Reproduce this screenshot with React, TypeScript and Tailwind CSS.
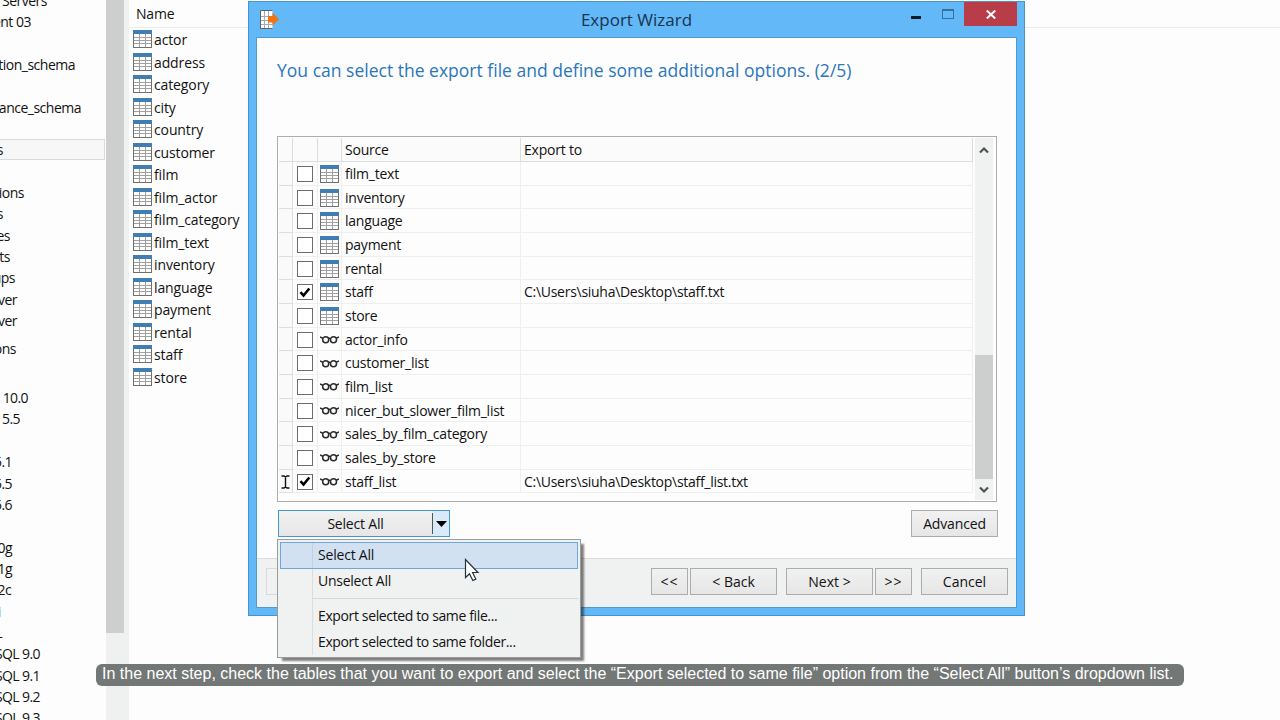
import clsx from 'clsx';

type TreeItem = { label: string; right: number; selected?: boolean; faded?: boolean; tight?: boolean };

// Object tree, scrolled sideways so only the ends of the labels show.
const serverTree: TreeItem[] = [
  { label: 'Servers', right: 47 },
  { label: 'ent 03', right: 31 },
  { label: '', right: 0 },
  { label: 'tion_schema', right: 75 },
  { label: '', right: 0 },
  { label: 'ance_schema', right: 81 },
  { label: '', right: 0 },
  { label: 's', right: 3, selected: true },
  { label: '', right: 0 },
  { label: 'ions', right: 24 },
  { label: 's', right: 3 },
  { label: 'es', right: 10 },
  { label: 'ts', right: 10 },
  { label: 'ups', right: 15 },
  { label: 'ver', right: 17 },
  { label: 'ver', right: 17 },
];

const versionTree: TreeItem[] = [
  { label: '10.0', right: 28, tight: true },
  { label: '5.5', right: 20, tight: true },
  { label: '', right: 0 },
  { label: '5.1', right: 12, tight: true },
  { label: '5.5', right: 12, tight: true },
  { label: '5.6', right: 12, tight: true },
  { label: '', right: 0 },
  { label: '0g', right: 12, tight: true },
  { label: '1g', right: 12, tight: true },
  { label: '2c', right: 11, tight: true },
  { label: 'i', right: 1, faded: true },
  { label: 'L', right: 2 },
  { label: 'SQL 9.0', right: 40, tight: true },
  { label: 'SQL 9.1', right: 40, tight: true },
  { label: 'SQL 9.2', right: 40, tight: true },
  { label: 'SQL 9.3', right: 40, tight: true },
];

const tables = [
  'actor', 'address', 'category', 'city', 'country', 'customer', 'film', 'film_actor',
  'film_category', 'film_text', 'inventory', 'language', 'payment', 'rental', 'staff', 'store',
];

type ExportRow = { name: string; kind: 'table' | 'view'; path?: string; editing?: boolean };

const exportRows: ExportRow[] = [
  { name: 'film_text', kind: 'table' },
  { name: 'inventory', kind: 'table' },
  { name: 'language', kind: 'table' },
  { name: 'payment', kind: 'table' },
  { name: 'rental', kind: 'table' },
  { name: 'staff', kind: 'table', path: 'C:\\Users\\siuha\\Desktop\\staff.txt' },
  { name: 'store', kind: 'table' },
  { name: 'actor_info', kind: 'view' },
  { name: 'customer_list', kind: 'view' },
  { name: 'film_list', kind: 'view' },
  { name: 'nicer_but_slower_film_list', kind: 'view' },
  { name: 'sales_by_film_category', kind: 'view' },
  { name: 'sales_by_store', kind: 'view' },
  { name: 'staff_list', kind: 'view', path: 'C:\\Users\\siuha\\Desktop\\staff_list.txt', editing: true },
];

function TableIcon() {
  return (
    <svg width="19" height="18" viewBox="0 0 19 18" className="shrink-0">
      <rect x="0.5" y="0.5" width="18" height="17" fill="#fff" stroke="#707070" />
      <path d="M1 7.5h17M1 10.5h17M1 13.5h17M6.5 4v13M12.5 4v13" stroke="#a0a0a0" fill="none" />
      <rect width="19" height="4" fill="#3f7db3" />
    </svg>
  );
}

function ViewIcon() {
  return (
    <svg width="19" height="9" viewBox="0 0 19 9" fill="none" stroke="#2a2a2a" strokeWidth="1.5" className="shrink-0">
      <path d="M0 2l2.800 1.200M19 2l-2.800 1.200M8.300 3.800q1.200-1 2.400 0" />
      <circle cx="5.700" cy="4.700" r="3" />
      <circle cx="13.500" cy="4.700" r="3" />
    </svg>
  );
}

function ExportIcon() {
  return (
    <svg width="20" height="19" viewBox="0 0 20 19">
      <path d="M1.500.5h12v18h-12z" fill="#fff" />
      <path d="M2 6.500h11M2 10.500h11M2 14.500h11M5.500 1v17M9.500 1v17" stroke="#a3a9ae" />
      <path d="M13.500.5h-12v18h12" fill="none" stroke="#59636c" />
      <path d="M9 6h4.500V2.700L20 9.200l-6.500 6.500V12.500H9z" fill="#f07412" />
    </svg>
  );
}

function Checkbox({ checked }: { checked: boolean }) {
  return (
    <span className="mr-px flex size-[16px] items-center justify-center border border-[#6c6c6c] bg-white">
      {checked && (
        <svg width="12" height="11" viewBox="0 0 12 11" fill="none" stroke="#000" strokeWidth="2.600">
          <path d="M1.500 5.200l3 3.300L10.300 1.500" />
        </svg>
      )}
    </span>
  );
}

function Chevron({ down }: { down?: boolean }) {
  return (
    <svg width="10" height="8" viewBox="0 0 10 8" fill="none" stroke="#505050" strokeWidth="2.200">
      <path d={down ? 'M1 1.500l4 4 4-4' : 'M1 6.500l4-4 4 4'} />
    </svg>
  );
}

function TreeRow({ item }: { item: TreeItem }) {
  return (
    <div
      className={clsx(
        'flex h-[21.35px] shrink-0 items-center border border-l-0',
        item.selected ? 'border-[#dadada] bg-[#f7f7f7]' : 'border-transparent',
      )}
    >
      <div
        className={clsx(
          'flex justify-end whitespace-pre',
          item.faded && 'text-[#7db9dd]',
          item.tight && 'tracking-[-0.6px]',
        )}
        style={{ width: item.right }}
      >
        {item.label}
      </div>
    </div>
  );
}

function Sidebar() {
  return (
    <div className="flex w-[129px] shrink-0">
      <div className="flex w-[106px] flex-col overflow-hidden pr-px text-[14px] tracking-[-0.5px]">
        <div className="-mt-[10.4px] shrink-0">
          {serverTree.map((item, i) => (
            <TreeRow key={i} item={item} />
          ))}
        </div>
        <div className="h-[7px] shrink-0" />
        <TreeRow item={{ label: 'ons', right: 16 }} />
        <div className="h-[27.5px] shrink-0" />
        {versionTree.map((item, i) => (
          <TreeRow key={i} item={item} />
        ))}
      </div>
      <div className="w-[23px] bg-[#eff0f0]">
        <div className="h-[633px] w-[18px] bg-[#cdcfce]" />
      </div>
    </div>
  );
}

function ObjectList() {
  return (
    <div className="flex-1">
      <div className="flex h-[28px] items-center border-b border-[#ececec] pl-[7px] text-[14px] tracking-[-0.2px]">
        Name
      </div>
      <div className="pl-[4px]">
        {tables.map((name) => (
          <div key={name} className="flex h-[22.5px] items-center gap-[2px] text-[14px] tracking-[-0.12px]">
            <TableIcon />
            <span className="mt-px">{name}</span>
          </div>
        ))}
      </div>
    </div>
  );
}

function TitleBar() {
  return (
    <div className="relative flex h-[35px] shrink-0 items-center justify-center">
      <span className="absolute top-[8px] left-[10px]">
        <ExportIcon />
      </span>
      <span className="text-[17px] text-[#17344e]">Export Wizard</span>
      <div className="absolute top-0 right-[7px] flex">
        <div className="flex h-[24px] w-[32px] items-center justify-center pt-[6px]">
          <span className="h-[3px] w-[10px] bg-[#111c26]" />
        </div>
        <div className="flex h-[24px] w-[32px] items-center justify-center">
          <span className="h-[10px] w-[12px] border border-t-2 border-[#38709c]" />
        </div>
        <div className="flex h-[24px] w-[53px] items-center justify-center bg-[#b93c49]">
          <svg width="10" height="9" viewBox="0 0 10 9" stroke="#fff" strokeWidth="2">
            <path d="M.8.5l8.400 8M9.200.5l-8.400 8" />
          </svg>
        </div>
      </div>
    </div>
  );
}

function ExportGrid() {
  const columns = 'grid grid-cols-[14px_25px_24px_179px_452px]';
  return (
    <div className="flex h-[366px] w-[720px] border border-[#adadad] bg-[#fdfdfd] p-px text-[14px]">
      <div className="w-[694px]">
        <div className={clsx(columns, 'h-[24px] border-b border-[#dcdcdc] bg-[#fbfbfb] tracking-[-0.2px]')}>
          <div className="border-r border-[#dcdcdc]" />
          <div className="border-r border-[#dcdcdc]" />
          <div className="border-r border-[#dcdcdc]" />
          <div className="flex items-center border-r border-[#dcdcdc] pl-[3px]">Source</div>
          <div className="flex items-center border-r border-[#dcdcdc] pl-[3px]">Export to</div>
        </div>
        {exportRows.map((row) => (
          <div key={row.name} className={clsx(columns, 'h-[23.68px]')}>
            <div className="flex items-center justify-center border-r border-b border-[#dedede] bg-[#fafafa] pt-px">
              {row.editing && (
                <svg width="9" height="14" viewBox="0 0 9 14" fill="none" stroke="#111" strokeWidth="1.400">
                  <path d="M.5 1h2.500l1.500 1 1.500-1h2.500M4.500 2v10M.5 13h2.500l1.500-1 1.500 1h2.500" />
                </svg>
              )}
            </div>
            <div className="flex items-center justify-center border-r border-b border-[#efefef] pt-px">
              <Checkbox checked={!!row.path} />
            </div>
            <div className="flex items-center justify-center border-r border-b border-[#efefef] pt-px">
              {row.kind === 'table' ? <TableIcon /> : <ViewIcon />}
            </div>
            <div className="flex items-center border-r border-b border-[#efefef] pl-[3px] tracking-[-0.24px]">
              {row.name}
            </div>
            <div className="flex items-center border-r border-b border-[#efefef] pl-[3px] tracking-[-0.28px]">
              {row.path}
            </div>
          </div>
        ))}
      </div>
      <div className="ml-[2px] flex w-[18px] flex-col items-center bg-[#f0f1f1]">
        <div className="flex h-[24px] items-center">
          <Chevron />
        </div>
        <div className="mt-[193px] h-[124px] w-full bg-[#cdcfce]" />
        <div className="flex flex-1 items-center">
          <Chevron down />
        </div>
      </div>
    </div>
  );
}

function PushButton({ label, className }: { label: string; className: string }) {
  return (
    <button
      className={clsx(
        'flex h-[27px] items-center justify-center border border-[#acacac] bg-linear-to-b from-[#f1f1f1] to-[#e6e6e6] text-[14px]',
        className,
      )}
    >
      {label}
    </button>
  );
}

function SelectMenu() {
  return (
    <div className="absolute top-[539px] left-[277px] h-[119px] w-[304px] border border-[#9b9b9b] bg-[#f0f1f1] p-[2px] text-[14px] tracking-[-0.37px] shadow-[4px_4px_2px_-1px_rgba(0,0,0,0.5)]">
      <div className="flex h-[27px] border border-[#6da7dc] bg-[#d2e1f2]">
        <div className="w-[32px] border-r border-[#c2d1e2]" />
        <div className="flex items-center pb-[2px] pl-[5px] tracking-[-0.2px]">Select All</div>
      </div>
      <div className="ml-[32px] flex flex-col border-l border-[#dcdddd]">
        <div className="flex h-[25px] items-center pb-[2px] pl-[5px] tracking-[-0.25px]">Unselect All</div>
        <div className="my-[4px] h-px bg-[#d6d7d7]" />
        <div className="flex h-[26px] items-center pb-px pl-[5px]">Export selected to same file...</div>
        <div className="flex h-[26px] items-center pb-px pl-[5px]">Export selected to same folder...</div>
      </div>
    </div>
  );
}

function ExportWizard() {
  return (
    <div className="absolute top-[1px] left-[248px] flex h-[615px] w-[777px] flex-col border border-[#4b92c9] bg-[#63b8f7]">
      <TitleBar />
      <div className="mx-[7px] mb-[7px] flex flex-1 flex-col border border-[#4f9ad2] bg-[#fdfdfd]">
        <h1 className="mt-[19px] ml-[20px] h-[26px] text-[17.500px] leading-[26px] tracking-[0.01px] whitespace-nowrap text-[#2b76bb]">
          You can select the export file and define some additional options. (2/5)
        </h1>
        <div className="mt-[53px] ml-[20px]">
          <ExportGrid />
        </div>
        <div className="mt-[8px] ml-[21px] flex w-[720px] justify-between">
          <button className="flex h-[27px] w-[172px] border border-[#4596d9] bg-linear-to-b from-[#f1f1f1] to-[#e6e6e6] text-[14px] tracking-[-0.2px]">
            <span className="flex h-full w-[153px] items-center justify-center">Select All</span>
            <span className="my-[2px] h-[21px] w-px bg-[#555]" />
            <span className="flex h-full flex-1 items-center justify-center bg-[#d9eafa]">
              <svg width="11" height="6" viewBox="0 0 11 6">
                <path d="M0 0h11l-5.500 6z" fill="#000" />
              </svg>
            </span>
          </button>
          <PushButton label="Advanced" className="w-[87px] tracking-[-0.15px]" />
        </div>
        <div className="mt-[21px] flex flex-1 border-t border-[#dcdcdc] bg-[#f0f1f1] pt-[9px] pr-[8px] pl-[9px]">
          <div className="h-[27px] w-[87px] border border-[#d9d9d9]" />
          <PushButton label="<<" className="ml-auto w-[37px] tracking-[1px]" />
          <PushButton label="< Back" className="ml-[2px] w-[87px]" />
          <PushButton label="Next >" className="ml-[9px] w-[87px]" />
          <PushButton label=">>" className="ml-[2px] w-[37px] tracking-[1px]" />
          <PushButton label="Cancel" className="ml-[9px] w-[87px]" />
        </div>
      </div>
    </div>
  );
}

export default function App() {
  return (
    <div className="relative flex h-[720px] w-[1280px] overflow-hidden bg-[#fdfdfd] font-['Open_Sans','Noto_Sans',sans-serif] text-[#121212]">
      <Sidebar />
      <ObjectList />
      <ExportWizard />
      <SelectMenu />
      <svg width="16" height="24" viewBox="0 0 16 24" className="absolute top-[558px] left-[464px]">
        <path
          d="M1.500 1.500v18l4-3.800 3.300 6.800 3-1.400-3.200-6.600h5.400z"
          fill="#fff"
          stroke="#26303c"
          strokeWidth="1.200"
        />
      </svg>
      <div className="absolute top-[664px] left-[96px] flex h-[22px] w-[1088px] items-center rounded-[6px] bg-[#737776] pb-[2px] pl-[6px] font-['Liberation_Sans',Arial,sans-serif] text-[16px] whitespace-nowrap text-white">
        In the next step, check the tables that you want to export and select the “Export selected to same file” option from the “Select All” button’s dropdown list.
      </div>
    </div>
  );
}
